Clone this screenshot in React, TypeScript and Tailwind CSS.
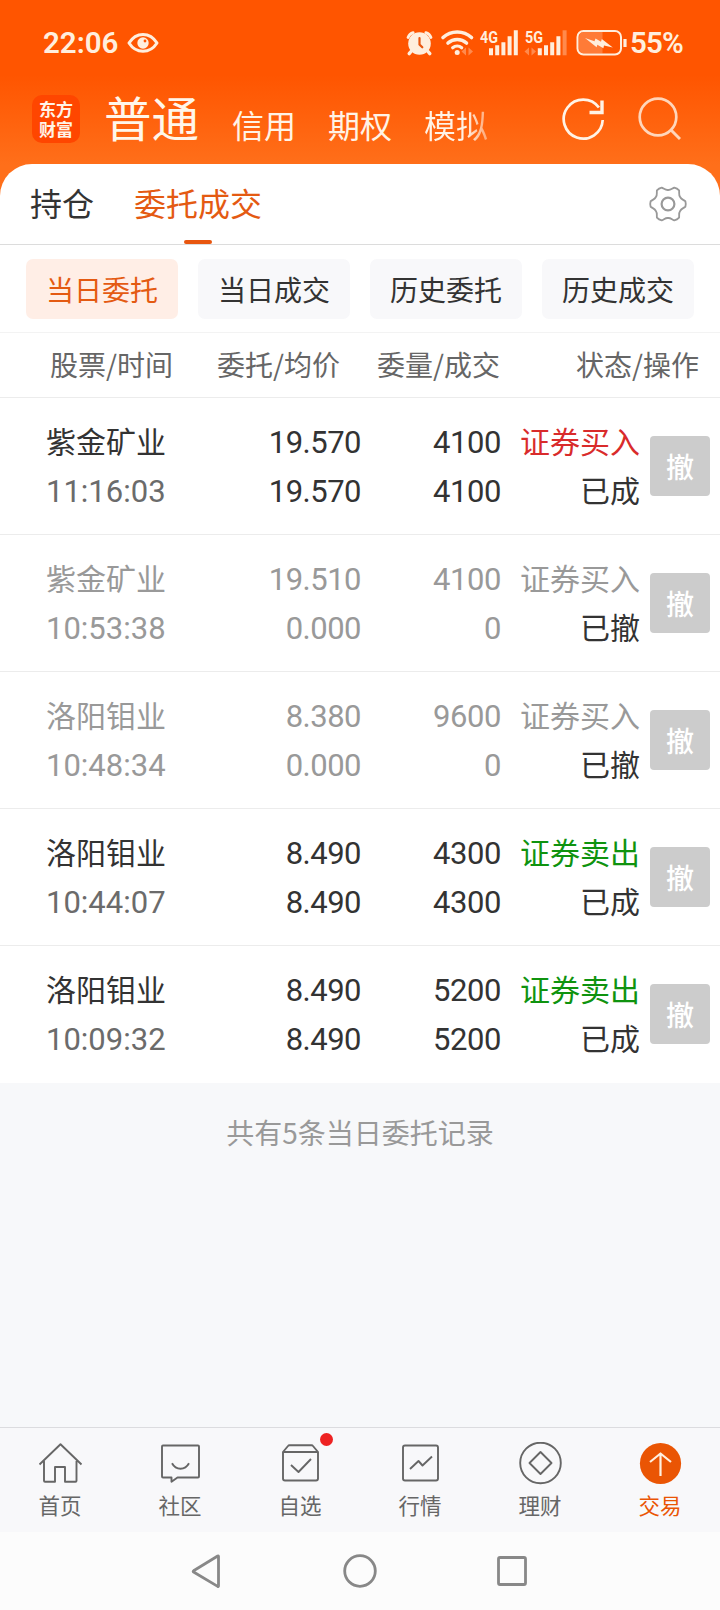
import clsx from "clsx";

type Order = {
  name: string;
  time: string;
  price: string;
  avg: string;
  qty: string;
  filled: string;
  side: string;
  status: string;
};

const orders: Order[] = [
  { name: "紫金矿业", time: "11:16:03", price: "19.570", avg: "19.570", qty: "4100", filled: "4100", side: "证券买入", status: "已成" },
  { name: "紫金矿业", time: "10:53:38", price: "19.510", avg: "0.000", qty: "4100", filled: "0", side: "证券买入", status: "已撤" },
  { name: "洛阳钼业", time: "10:48:34", price: "8.380", avg: "0.000", qty: "9600", filled: "0", side: "证券买入", status: "已撤" },
  { name: "洛阳钼业", time: "10:44:07", price: "8.490", avg: "8.490", qty: "4300", filled: "4300", side: "证券卖出", status: "已成" },
  { name: "洛阳钼业", time: "10:09:32", price: "8.490", avg: "8.490", qty: "5200", filled: "5200", side: "证券卖出", status: "已成" },
];

const filters = ["当日委托", "当日成交", "历史委托", "历史成交"];

// Six-lobed gear outline around (20, 20)
const gearPath = (() => {
  const pt = (deg: number, r: number) => {
    const a = (deg * Math.PI) / 180;
    return `${(20 + r * Math.cos(a)).toFixed(2)} ${(20 + r * Math.sin(a)).toFixed(2)}`;
  };
  let d = `M${pt(-9, 17.6)}`;
  for (let a = 0; a < 360; a += 60) {
    d += `Q${pt(a, 18.2)} ${pt(a + 9, 17.6)}`;
    d += `C${pt(a + 17, 15.6)} ${pt(a + 19, 14)} ${pt(a + 30, 14)}`;
    d += `C${pt(a + 41, 14)} ${pt(a + 43, 15.6)} ${pt(a + 51, 17.6)}`;
  }
  return d + "Z";
})();

function StatusBar() {
  return (
    <div className="flex h-[85px] items-start justify-between text-[#ffeedd]">
      <div className="flex items-center pl-[43px] pt-[25px]">
        <span className="font-[Roboto] text-[29.5px] font-semibold leading-[36px]">22:06</span>
        <svg className="ml-[9px]" width="32" height="22" viewBox="0 0 32 22" fill="none">
          <path d="M2 11C9-.5 23-.5 30 11 23 22 9 22 2 11Z" stroke="currentColor" strokeWidth="3" strokeLinejoin="round" />
          <circle cx="16" cy="11" r="5.7" fill="currentColor" />
          <circle cx="18" cy="9" r="1.4" fill="#ff5500" />
        </svg>
      </div>
      <div className="flex items-center pr-[38px] pt-[25px]">
        <svg width="225" height="36" viewBox="405 24 225 36" fill="none">
          {/* alarm */}
          <circle cx="419.5" cy="42.5" r="11.3" fill="currentColor" />
          <path d="M411 50.5l-1.8 2.2M428 50.500l1.800 2.200" stroke="currentColor" strokeWidth="3.400" strokeLinecap="round" />
          <path d="M408 36.500a8 8 0 0 1 5.200-4.800M431 36.500a8 8 0 0 0-5.200-4.800" stroke="currentColor" strokeWidth="2.800" strokeLinecap="round" />
          <path d="M419.500 37v6.500l2.800 2.800" stroke="#e8560f" strokeWidth="2.200" strokeLinecap="round" />
          {/* wifi */}
          <path d="M443 36.500a21 21 0 0 1 28.500 0" stroke="currentColor" strokeWidth="3.600" strokeLinecap="round" />
          <path d="M448 42a14 14 0 0 1 18.500 0" stroke="currentColor" strokeWidth="3.600" strokeLinecap="round" />
          <path d="M452.700 46.800a7 7 0 0 1 9 0" stroke="currentColor" strokeWidth="3.200" strokeLinecap="round" />
          <circle cx="457.200" cy="51.500" r="2.500" fill="currentColor" />
          <path d="M461.500 50.500l4.500-4v8zM473 50.500l-4.500-4v8z" fill="currentColor" opacity=".35" />
          {/* mobile signal 4G / 5G */}
          <text x="480" y="41.500" fill="currentColor" fontFamily="Roboto" fontWeight="700" fontSize="16.500" textLength="18" lengthAdjust="spacingAndGlyphs">4G</text>
          <path d="M491 54.300v-7M497.200 54.300v-10M503.400 54.300v-13M509.600 54.300v-19M515.800 54.300v-25" stroke="currentColor" strokeWidth="4" />
          <text x="525" y="41.500" fill="currentColor" fontFamily="Roboto" fontWeight="700" fontSize="16.500" textLength="18" lengthAdjust="spacingAndGlyphs">5G</text>
          <path d="M524.500 50.500l4.500-4v8zM536 50.500l-4.500-4v8z" fill="currentColor" opacity=".35" />
          <path d="M539.800 54.300v-7M546 54.300v-10M552.200 54.300v-13M558.400 54.300v-19" stroke="currentColor" strokeWidth="4" />
          <path d="M564.600 54.300v-25" stroke="currentColor" strokeWidth="4" opacity=".35" />
          {/* battery */}
          <rect x="577.500" y="30" width="43.500" height="23.500" rx="6" stroke="currentColor" strokeWidth="2" />
          <path d="M584 31h18.500v21.500H584a5 5 0 0 1-5-5V36a5 5 0 0 1 5-5z" fill="currentColor" opacity=".25" />
          <path d="M585 37l9.500 3.200 1-2.700 5.500 3.200.8-2.700 11 8.500-8.800-2-.6 2.700-6-3.400-.8 2.500z" fill="currentColor" />
          <path d="M625 38v8" stroke="currentColor" strokeWidth="3.200" />
        </svg>
        <span className="w-[52px] font-[Roboto] text-[29.5px] font-semibold leading-[36px] tracking-[-0.9px]">55%</span>
      </div>
    </div>
  );
}

function AppHeader() {
  return (
    <header className="flex h-[79px] items-start text-[#fff3e6]">
      <div className="ml-8 mt-[10px] flex h-12 w-12 flex-col items-center justify-center rounded-[10px] bg-[#ff4600] pb-px text-[17px] font-bold leading-[20px]">
        <span>东方</span>
        <span>财富</span>
      </div>
      <span className="ml-[24px] mt-[2px] text-[47.5px] leading-[60px] text-[#fff6ea]">普通</span>
      <nav className="ml-[33px] mt-[15px] flex gap-8 text-[32px] leading-[48px]">
        <span>信用</span>
        <span>期权</span>
        <span className="bg-linear-to-r from-[#fff3e6] from-65% to-[#ffa370] bg-clip-text text-transparent">模拟</span>
      </nav>
      <svg className="ml-auto mr-8 mt-[12px]" width="44" height="44" viewBox="0 0 44 44" fill="none" stroke="currentColor" strokeWidth="2.7">
        <path d="M41.700 23a19.500 19.500 0 1 1-3.800-12.500" />
        <path d="M41 3.500v12H28.500" strokeWidth="3.400" />
      </svg>
      <svg className="mr-[39px] mt-[12px] opacity-80" width="44" height="44" viewBox="0 0 44 44" fill="none" stroke="currentColor" strokeWidth="2.7">
        <circle cx="21" cy="20" r="18.300" />
        <path d="M33.500 32.500l9.500 9.500" strokeWidth="3" />
      </svg>
    </header>
  );
}

function OrderRow({ order }: { order: Order }) {
  const canceled = order.status === "已撤";
  const sideColor = canceled ? "text-[#999]" : order.side === "证券买入" ? "text-[#d92b2b]" : "text-[#0f930f]";

  return (
    <div
      className={clsx(
        "grid h-[137px] grid-cols-[185px_176px_140px_139px_80px] border-b border-[#ececec] pt-[18px] text-[30px] leading-[49px] last:border-white",
        canceled ? "text-[#999]" : "text-[#333]"
      )}
    >
      <div className="pl-[46px]">
        <div>{order.name}</div>
        <div className={clsx("pt-[2px] font-[Roboto] text-[31px]", !canceled && "text-[#6b6b6b]")}>{order.time}</div>
      </div>
      <div className="pt-[2px] text-right font-[Roboto] text-[31px] tracking-[-0.5px]">
        <div>{order.price}</div>
        <div>{order.avg}</div>
      </div>
      <div className="pt-[2px] text-right font-[Roboto] text-[31px] tracking-[-0.4px]">
        <div>{order.qty}</div>
        <div>{order.filled}</div>
      </div>
      <div className="text-right">
        <div className={sideColor}>{order.side}</div>
        <div className="text-[#333]">{order.status}</div>
      </div>
      <button className="ml-[10px] mt-[20px] h-[60px] w-[60px] rounded-[4px] bg-[#ccc] text-[28px] font-medium leading-[58px] text-white">撤</button>
    </div>
  );
}

const navItems = [
  {
    label: "首页",
    icon: <path d="M1.500 22L22.500 1.800 43.500 22M6 18.500v19.700a1 1 0 0 0 1 1h10V24.500h10v14.700h10.500a1 1 0 0 0 1-1V18.500" />,
  },
  {
    label: "社区",
    icon: <path d="M5 3h35a1 1 0 0 1 1 1v30a1 1 0 0 1-1 1H19.500l-6 4.300V35H5a1 1 0 0 1-1-1V4a1 1 0 0 1 1-1zM14 20.800c4 7.300 13 7.300 17 0" />,
  },
  {
    label: "自选",
    icon: <path d="M5 9.500V36a2 2 0 0 0 2 2h31a2 2 0 0 0 2-2V9.500zM5 9.500l5-6q.5-.7 1.500-.7h22q1 0 1.500.7l5 6M13 22.500l7.500 7 12.500-13" />,
    dot: true,
  },
  {
    label: "行情",
    icon: <path d="M7 3h31a2 2 0 0 1 2 2v31a2 2 0 0 1-2 2H7a2 2 0 0 1-2-2V5a2 2 0 0 1 2-2zM12 26.500l8.500-8 4 4.500L34 14" />,
  },
  {
    label: "理财",
    icon: (
      <>
        <circle cx="22.500" cy="20.500" r="20.300" />
        <path d="M22.500 9.500l11 11-11 11-11-11z" />
      </>
    ),
  },
  {
    label: "交易",
    active: true,
    icon: (
      <>
        <circle cx="22.500" cy="21" r="20.600" fill="#ea5504" stroke="none" />
        <path d="M22.500 33.500V11M12 19.500l10.500-8.500L33 19.500" stroke="#fff0e0" strokeWidth="2.2" />
      </>
    ),
  },
];

function BottomNav() {
  return (
    <nav className="grid h-[105px] grid-cols-6 border-t border-[#dcdcdf] bg-[#f8f8fa]">
      {navItems.map((item) => (
        <div key={item.label} className={clsx("relative flex flex-col items-center pt-[14px]", item.active ? "text-[#ea5504]" : "text-[#666]")}>
          <svg width="45" height="43" viewBox="0 -0.5 45 43" fill="none" stroke="currentColor" strokeWidth="1.9" strokeLinejoin="round">
            {item.icon}
          </svg>
          <span className="mt-[5px] text-[21.5px] leading-[30px]">{item.label}</span>
          {item.dot && <span className="absolute left-[80px] top-[5px] h-[13px] w-[13px] rounded-full bg-[#ee2222]" />}
        </div>
      ))}
    </nav>
  );
}

export default function App() {
  return (
    <div className="flex h-[1610px] w-[720px] flex-col overflow-hidden bg-[#f7f8fa] font-['Noto_Sans_CJK_SC',sans-serif]">
      <div className="bg-[linear-gradient(to_bottom,#ff5500_75px,#ff6f1a_165px)]">
        <StatusBar />
        <AppHeader />

        {/* Page tabs */}
        <div className="flex h-[81px] items-start rounded-t-[32px] border-b border-[#dcdcdc] bg-white pl-[30px] text-[32px] leading-[76px]">
          <span className="text-[#333]">持仓</span>
          <div className="ml-10 flex flex-col items-center text-[#e45a12]">
            <span>委托成交</span>
            <span className="h-1 w-7 rounded-full bg-[#e8560f]" />
          </div>
          <svg className="ml-auto mr-8 mt-5" width="40" height="40" viewBox="0 0 40 40" fill="none" stroke="#999" strokeLinejoin="round">
            <path d={gearPath} strokeWidth="1.8" />
            <circle cx="20" cy="20" r="6.4" strokeWidth="2.2" />
          </svg>
        </div>
      </div>

      {/* Filters */}
      <div className="flex h-[88px] gap-5 border-b border-[#f3f3f3] bg-white px-[26px] pt-[14px]">
        {filters.map((label, i) => (
          <button
            key={label}
            className={clsx(
              "h-[60px] w-[152px] rounded-[7px] text-[28px] leading-[59px]",
              i === 0 ? "bg-[#ffeee6] text-[#e45a12]" : "bg-[#f8f8fa] text-[#333]"
            )}
          >
            {label}
          </button>
        ))}
      </div>

      {/* Column titles */}
      <div className="grid h-[65px] grid-cols-[185px_176px_140px_219px] border-b border-[#ececec] bg-white text-[28px] leading-[63px] text-[#666]">
        <span className="pl-[50px]">股票/时间</span>
        <span className="pr-[21px] text-right">委托/均价</span>
        <span className="pr-px text-right">委量/成交</span>
        <span className="pr-[21px] text-right">状态/操作</span>
      </div>

      <div className="bg-white">
        {orders.map((order) => (
          <OrderRow key={order.time} order={order} />
        ))}
      </div>

      <p className="mt-[28px] text-center text-[28px] leading-[42px] text-[#999]">共有5条当日委托记录</p>

      <div className="mt-auto">
        <BottomNav />
        {/* System navigation */}
        <div className="flex h-[78px] items-center justify-center bg-[#fcfcfc]">
          <svg width="340" height="36" viewBox="190 1553 340 36" fill="none" stroke="#888" strokeWidth="2.8" strokeLinejoin="round">
            <path d="M218.500 1556.500v29.500q0 .800-.800.400L193.600 1572q-.900-.600 0-1.200l24.100-14.800q.800-.400.800.500z" />
            <circle cx="360" cy="1571" r="15.300" />
            <rect x="498.500" y="1557.500" width="27" height="27" rx="1.500" />
          </svg>
        </div>
      </div>
    </div>
  );
}
